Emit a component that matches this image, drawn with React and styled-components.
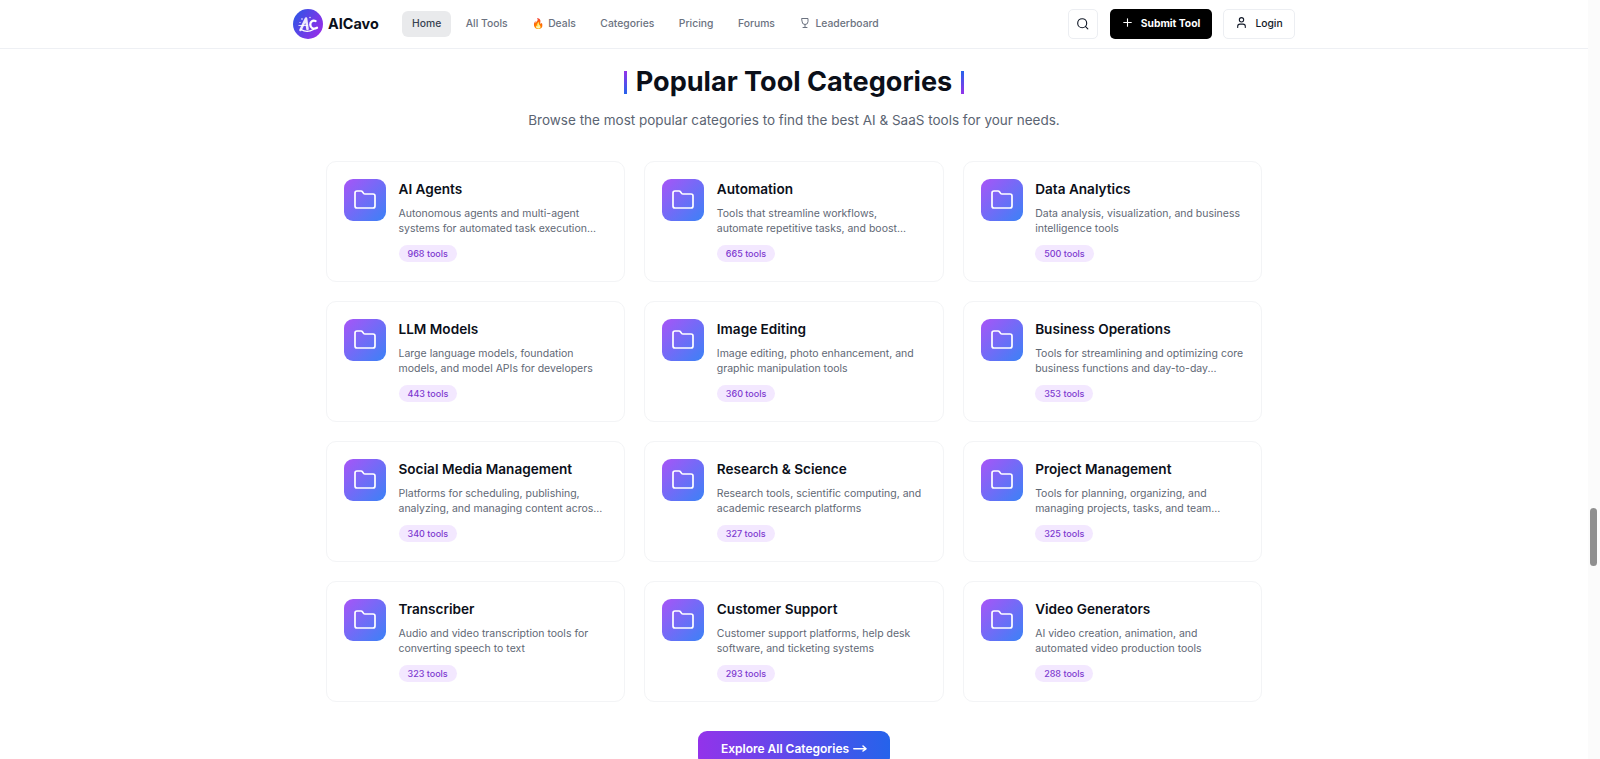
import React from "react";
import styled, { createGlobalStyle } from "styled-components";
import { Search, Plus, User, Folder } from "lucide-react";

const Global = createGlobalStyle`
  html, body { margin: 0; padding: 0; height: 759px; overflow: hidden; background: #fff; font-family: Inter, "Liberation Sans", sans-serif; }
  * { box-sizing: border-box; }
`;
const Page = styled.div`height: 759px; overflow: hidden; position: relative; background: #fff; display: flex;`;
const Main = styled.main`width: 1588px; flex: none;`;
const Track = styled.div`flex: 1; position: relative; background: #fbfbfb;`;
const Thumb = styled.div`position: absolute; left: 2px; top: 508px; width: 7px; height: 58px; border-radius: 4px; background: #8f8f8f;`;
const Header = styled.header`height: 49px; border-bottom: 1px solid #eef0f4; display: flex; justify-content: center;`;
const HeaderInner = styled.div`width: 1002px; display: flex; align-items: center; padding-bottom: 1px;`;
const Brand = styled.div`display: flex; align-items: center; gap: 5px; font-size: 14.4px; font-weight: 700; color: #0b0f19; width: 109px;`;
const Nav = styled.nav`display: flex; align-items: center; gap: 4.5px; flex: 1;`;
const NavItem = styled.a`height: 26px; padding: 0 10px 1px; border-radius: 6px; display: flex; align-items: center; gap: 4px; font-size: 10.35px; font-weight: 500; color: ${p => p.$active ? "#374151" : "#6b7280"}; background: ${p => p.$active ? "#e9eaec" : "transparent"};`;
const Actions = styled.div`display: flex; align-items: center; gap: 11.5px;`;
const IconBtn = styled.button`width: 30px; height: 30px; border: 1px solid #eceef2; border-radius: 5px; background: #fff; display: flex; align-items: center; justify-content: center; color: #111827; padding: 0;`;
const Submit = styled.button`height: 30px; width: 102px; border: 0; padding: 0 0 1.5px; border-radius: 5px; background: #000; color: #fff; font: 700 10.3px Inter, sans-serif; display: flex; align-items: center; justify-content: center; gap: 7px;`;
const Login = styled.button`height: 30px; width: 72px; border: 1px solid #eceef2; padding: 0 0 1.5px; border-radius: 5px; background: #fff; color: #111827; font: 500 10.3px Inter, sans-serif; display: flex; align-items: center; justify-content: center; gap: 7px;`;
const Section = styled.section`display: flex; flex-direction: column; align-items: center;`;
const Title = styled.h2`margin: 17px 0 0; height: 32px; font-size: 27.1px; line-height: 32px; font-weight: 700; color: #0b0f19; display: flex; align-items: center; gap: 8.5px;`;
const Bar = styled.span`width: 3px; height: 23px; background: linear-gradient(${p => p.$flip ? "180deg,#2563eb,#9333ea" : "180deg,#9333ea,#2563eb"}); display: block;`;
const Sub = styled.p`margin: 11.5px 0 0; font-size: 13.5px; line-height: 20px; color: #5b6472;`;
const Grid = styled.div`margin-top: 31px; width: 936px; display: grid; grid-template-columns: repeat(3, 1fr); column-gap: 19px; row-gap: 19px;`;
const Card = styled.div`height: 121px; border: 1px solid #f3f4f6; border-radius: 10px; padding: 17px 15px 17px 17px; display: flex; gap: 12.5px; background: #fff;`;
const Tile = styled.div`width: 42px; height: 42px; border-radius: 9px; background: linear-gradient(135deg,#a855f7,#3b82f6); color: #fff; display: flex; align-items: center; justify-content: center; flex: none;`;
const Body = styled.div`min-width: 0; flex: 1;`;
const Name = styled.div`font-size: 13.6px; font-weight: 600; line-height: 20px; color: #0b0f19;`;
const Desc = styled.div`margin-top: 7.5px; font-size: 10.5px; line-height: 15px; color: #5f6875; white-space: pre-line;`;
const Count = styled.span`display: inline-block; margin-top: 9px; height: 17px; padding: 0 9px; border-radius: 9px; background: #f3e8ff; color: #7e3ad0; font-size: 9px; font-weight: 500; line-height: 17px;`;
const Explore = styled.button`margin-top: 29.5px; width: 192px; height: 35px; flex: none; border: 0; border-radius: 9px; background: linear-gradient(90deg,#9333ea,#2563eb); color: #fff; font: 600 12px Inter, sans-serif; display: flex; align-items: center; justify-content: center; gap: 4px;`;
const Glyph = styled.span`font-size: 10px; line-height: 1;`;

const cats = [
["AI Agents","Autonomous agents and multi-agent systems for automated task execution...","968 tools"],
["Automation","Tools that streamline workflows,\nautomate repetitive tasks, and boost...","665 tools"],
["Data Analytics","Data analysis, visualization, and business intelligence tools","500 tools"],
["LLM Models","Large language models, foundation models, and model APIs for developers","443 tools"],
["Image Editing","Image editing, photo enhancement, and graphic manipulation tools","360 tools"],
["Business Operations","Tools for streamlining and optimizing core business functions and day-to-day...","353 tools"],
["Social Media Management","Platforms for scheduling, publishing, analyzing, and managing content acros...","340 tools"],
["Research & Science","Research tools, scientific computing, and academic research platforms","327 tools"],
["Project Management","Tools for planning, organizing, and managing projects, tasks, and team...","325 tools"],
["Transcriber","Audio and video transcription tools for converting speech to text","323 tools"],
["Customer Support","Customer support platforms, help desk software, and ticketing systems","293 tools"],
["Video Generators","AI video creation, animation, and automated video production tools","288 tools"],
];

const LogoMark = () => (
  <svg width="30" height="30" viewBox="0 0 30 30" fill="none">
    <defs>
      <linearGradient id="lg" x1="0" y1="0.2" x2="1" y2="0.8">
        <stop offset="0" stopColor="#2f55e6" />
        <stop offset="1" stopColor="#9a2be8" />
      </linearGradient>
    </defs>
    <circle cx="15" cy="15" r="15" fill="url(#lg)" />
    <path d="M7.5 21 L13 9.5 L14.5 20" stroke="#fff" strokeWidth="2.6" strokeLinecap="round" strokeLinejoin="round" opacity="0.88" />
    <path d="M5.5 16.5 H15" stroke="#fff" strokeWidth="1" opacity="0.8" />
    <path d="M22.5 12 C19.5 10.8 17.2 13 17.3 15.8 C17.4 19 20.5 20.6 24 18.8" stroke="#fff" strokeWidth="2.3" strokeLinecap="round" />
    <path d="M8 20.5 C12 23 17 22.5 20.5 20.5" stroke="#fff" strokeWidth="1.4" strokeLinecap="round" />
    <circle cx="9" cy="10" r="0.8" fill="#fff" />
    <circle cx="17" cy="8.5" r="0.7" fill="#fff" />
    <circle cx="7" cy="13.5" r="0.6" fill="#fff" />
  </svg>
);

const Cup = () => (
  <svg width="12" height="12" viewBox="0 0 24 24" fill="none" stroke="currentColor" strokeWidth="2" strokeLinecap="round" strokeLinejoin="round">
    <path d="M6 3h12v6a6 6 0 0 1-12 0z" />
    <path d="M12 15v6M8 21h8" />
  </svg>
);

const LongArrow = () => (
  <svg width="14" height="9" viewBox="0 0 14 9" fill="none" stroke="currentColor" strokeWidth="1.5" strokeLinecap="round" strokeLinejoin="round">
    <path d="M0.8 4.8H13M10 2l3 2.8-3 2.2" />
  </svg>
);

export default function App() {
  return (
    <Page>
      <Global />
      <Main>
        <Header>
          <HeaderInner>
            <Brand><LogoMark />AICavo</Brand>
            <Nav>
              <NavItem $active>Home</NavItem>
              <NavItem>All Tools</NavItem>
              <NavItem><Glyph>🔥</Glyph>Deals</NavItem>
              <NavItem>Categories</NavItem>
              <NavItem>Pricing</NavItem>
              <NavItem>Forums</NavItem>
              <NavItem><Cup />Leaderboard</NavItem>
            </Nav>
            <Actions>
              <IconBtn><Search size={13.5} /></IconBtn>
              <Submit><Plus size={13} />Submit Tool</Submit>
              <Login><User size={13} />Login</Login>
            </Actions>
          </HeaderInner>
        </Header>
        <Section>
          <Title><Bar />Popular Tool Categories<Bar $flip /></Title>
          <Sub>Browse the most popular categories to find the best AI &amp; SaaS tools for your needs.</Sub>
          <Grid>
            {cats.map(c => (
              <Card key={c[0]}>
                <Tile><Folder size={24} strokeWidth={1.7} /></Tile>
                <Body><Name>{c[0]}</Name><Desc>{c[1]}</Desc><Count>{c[2]}</Count></Body>
              </Card>
            ))}
          </Grid>
          <Explore>Explore All Categories<LongArrow /></Explore>
        </Section>
      </Main>
      <Track><Thumb /></Track>
    </Page>
  );
}
